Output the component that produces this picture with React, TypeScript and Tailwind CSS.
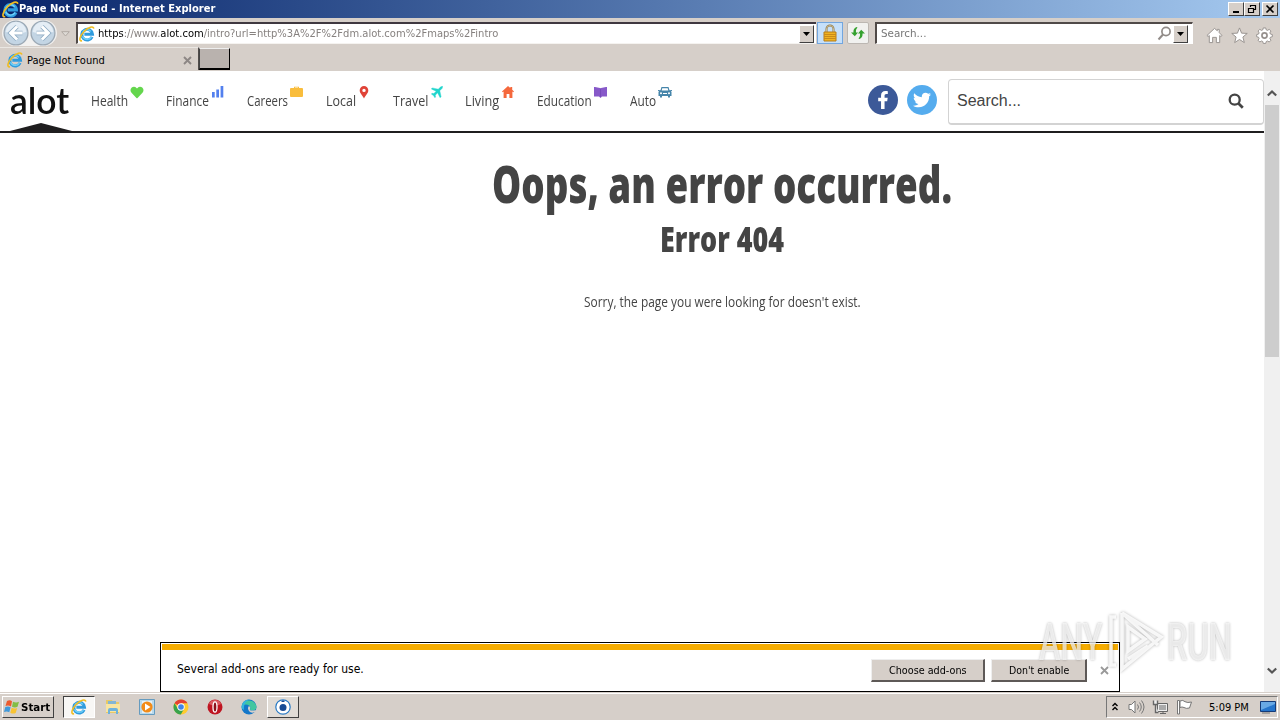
import { useLayoutEffect, useRef, useState } from "react";
import type { ReactNode } from "react";
import { FaFacebookF, FaHeart, FaTwitter } from "react-icons/fa";

const tahoma = "font-['DejaVu_Sans_Condensed','DejaVu_Sans',sans-serif]";
const narrow = "font-['Open_Sans',sans-serif]";

// Squeezes a line of text to a fixed width, for condensed lettering
function Fit({
  width,
  className = "",
  children,
}: {
  width: number;
  className?: string;
  children: ReactNode;
}) {
  const ref = useRef<HTMLSpanElement>(null);
  const [scale, setScale] = useState(1);

  useLayoutEffect(() => {
    if (ref.current) setScale(width / ref.current.offsetWidth);
  }, [width]);

  return (
    <span className={`block shrink-0 ${className}`} style={{ width }}>
      <span
        ref={ref}
        className="inline-block origin-left whitespace-pre"
        style={{ transform: `scaleX(${scale})` }}
      >
        {children}
      </span>
    </span>
  );
}

function IeIcon({ className = "size-4" }: { className?: string }) {
  return (
    <svg viewBox="0 0 18 18" className={`shrink-0 ${className}`} fill="none">
      <path
        d="M14.7 12.2A6 6 0 1 1 15.2 9.4H6"
        stroke="#2f9bdd"
        strokeWidth="3.4"
      />
      <path
        d="M14 12.4A5.7 5.7 0 0 1 4 11.5M4 7.5A5.6 5.6 0 0 1 13.4 6"
        stroke="#6fd0f8"
        strokeWidth="1.5"
      />
      <path
        d="M3.4 16.6C-.7 17.5.8 11.2 5.7 6.2 10.4 1.4 16.4-.6 16.6 3"
        stroke="#f1bd22"
        strokeWidth="1.8"
      />
    </svg>
  );
}

const navItems = [
  {
    label: "Health",
    width: 37,
    box: "w-[75px]",
    icon: <FaHeart className="ml-[2px] h-[13px] w-[14px]" color="#64d64d" />,
  },
  {
    label: "Finance",
    width: 43,
    box: "w-[81px]",
    icon: (
      <svg viewBox="0 0 12 12" className="ml-[3px] size-3" fill="#5380ee">
        <path d="M0 6h2.700v5.500H0zM4.300 3.500H7v8H4.300zM8.600 0h2.700v11.500H8.600z" />
      </svg>
    ),
  },
  {
    label: "Careers",
    width: 41,
    box: "w-[79px]",
    icon: (
      <svg viewBox="0 0 13 12" className="ml-[2px] h-3 w-[13px]" fill="#f9bd3c">
        <path
          fillRule="evenodd"
          d="M4 2V.700h5V2h3a1 1 0 0 1 1 1v7a1 1 0 0 1-1 1H1a1 1 0 0 1-1-1V3a1 1 0 0 1 1-1zM5 1.500h3V2H5z"
        />
      </svg>
    ),
  },
  {
    label: "Local",
    width: 30,
    box: "w-[67px]",
    icon: (
      <svg viewBox="0 0 10 13" className="ml-[3px] h-[13px] w-[10px]" fill="#e04338">
        <path
          fillRule="evenodd"
          d="M5 0a4.300 4.300 0 0 0-4.300 4.300C.7 7.500 3.400 9 5 12.500c1.600-3.500 4.300-5 4.300-8.200A4.300 4.300 0 0 0 5 0m0 2.700a1.700 1.700 0 1 1 0 3.400 1.700 1.700 0 0 1 0-3.400"
        />
      </svg>
    ),
  },
  {
    label: "Travel",
    width: 35,
    box: "w-[72px]",
    icon: (
      <svg viewBox="0 0 12 12" className="ml-[3px] size-3" fill="#20d5cc" stroke="#20d5cc" strokeWidth=".4">
        <path d="m11.700.3-.5 2-2.400 2.400 1.300 6-1 1-2.500-4.900-2.300 2.400.3 1.700-.7.800-1.400-2.200L.3 8.100l.8-.8 1.700.3L5.200 5.300.3 2.900l1-1 6 1.300L9.700.8z" />
      </svg>
    ),
  },
  {
    label: "Living",
    width: 34,
    box: "w-[72px]",
    icon: (
      <svg viewBox="0 0 12 12" className="ml-[3px] size-3" fill="#f5683c">
        <path d="M6 0 0 5.500l.7.800L1.600 5.500V12h3V8h2.800v4h3V5.500l.9.800.7-.8-1.800-1.700V1H8.300v1.100z" />
      </svg>
    ),
  },
  {
    label: "Education",
    width: 55,
    box: "w-[93px]",
    icon: (
      <svg viewBox="0 0 13 12" className="ml-[2px] h-3 w-[13px]" fill="#8759c9">
        <path d="M0 1h1l5 1 .5.500L7 2l5-1h1v9.500H8L6.500 12 5 10.500H0z" />
        <path d="M6.500 2.500v8.500" stroke="#6f43b1" strokeWidth=".7" />
      </svg>
    ),
  },
  {
    label: "Auto",
    width: 26,
    box: "w-[60px]",
    icon: (
      <svg viewBox="0 0 14 12" className="ml-[2px] h-3 w-[14px]" fill="#4685aa">
        <path
          fillRule="evenodd"
          d="M3.500 1h7l1 3.300L14 4v1h-1l.5 1v4H12v1.500h-2V10H4v1.500H2V10H.5V6L1 5H0V4l2.500.3zm.8 1.200-.6 2.300h6.600l-.6-2.300zM3 6.200a1 1 0 1 0 0 2 1 1 0 0 0 0-2m8 0a1 1 0 1 0 0 2 1 1 0 0 0 0-2M5 7v1h4V7z"
        />
      </svg>
    ),
  },
];

function TitleBar() {
  return (
    <div className="flex h-[18px] items-center bg-linear-to-r from-[#0a246a] to-[#a6caf0] pl-[2px] pr-[2px]">
      <IeIcon className="size-[17px]" />
      <Fit width={196} className={`text-[11px] font-bold leading-[18px] text-white ${tahoma}`}>
        Page Not Found - Internet Explorer
      </Fit>
      <div className="ml-auto flex">
        {["min", "max", "close"].map((kind) => (
          <div
            key={kind}
            className="flex h-[14px] w-4 items-center justify-center border border-b-[#404040] border-l-white border-r-[#404040] border-t-white bg-[#d6cfc9] last:ml-[2px]"
          >
            <svg viewBox="0 0 12 10" className="h-[10px] w-3" fill="none" stroke="#000">
              {kind === "min" && <path d="M3 8h6" strokeWidth="2" />}
              {kind === "max" && (
                <path d="M4.500 3V1.500h5v4H8M4 1.500h6M2.500 4.500h5v4h-5zM2 4.500h6" strokeWidth="1.200" />
              )}
              {kind === "close" && <path d="m2.500 1.500 7 7m0-7-7 7" strokeWidth="1.700" />}
            </svg>
          </div>
        ))}
      </div>
    </div>
  );
}

function DropButton() {
  return (
    <div className="flex h-[18px] w-[15px] items-center justify-center border border-b-[#404040] border-l-white border-r-[#404040] border-t-white bg-[#d6cfc9]">
      <svg viewBox="0 0 7 4" className="h-1 w-[7px]">
        <path d="M0 0h7L3.500 4z" />
      </svg>
    </div>
  );
}

function Toolbar() {
  return (
    <div className="flex h-[29px] items-start bg-[#d6cfc9] pt-1">
      <div className="-mt-[2px] ml-[2px] flex h-[26px] w-[55px] items-center justify-between rounded-full bg-[#f2f1f0] px-px">
        {["M13 6 7 12l6 6M7 12h11", "m11 6 6 6-6 6m6-6H6"].map((d) => (
          <svg key={d} viewBox="0 0 24 24" className="size-[26px]" fill="none">
            <circle cx="12" cy="12" r="11" fill="#c3d5e4" stroke="#9ca9b5" strokeWidth="1.200" />
            <path d="M2.500 11a9.500 9.500 0 0 1 19 0q-9.500 3-19 0" fill="#e4edf5" />
            <path d={d} stroke="#8eabc3" strokeWidth="4.200" />
            <path d={d} stroke="#fff" strokeWidth="2.700" />
          </svg>
        ))}
      </div>
      <svg viewBox="0 0 9 6" className="ml-1 mt-[9px] h-[6px] w-[9px]" fill="#dedad5" stroke="#b0a9a3">
        <path d="M.7.700h7.600L4.500 5z" />
      </svg>
      <div className="ml-[6px] flex h-[22px] w-[740px] items-center border-b border-l-2 border-t-2 border-b-[#f5f3f0] border-l-[#504a48] border-t-[#3f3840] bg-white pl-px">
        <IeIcon className="size-4" />
        <Fit width={400} className={`ml-[3px] text-[11px] leading-4 text-[#86817f] ${tahoma}`}>
          <span className="text-black">https</span>://www.<span className="text-black">alot.com</span>
          /intro?url=http%3A%2F%2Fdm.alot.com%2Fmaps%2Fintro
        </Fit>
        <div className="ml-auto mr-[2px]">
          <DropButton />
        </div>
      </div>
      <div className="ml-px flex h-[22px] w-[26px] items-center justify-center border border-[#72a6df] bg-[#c6e0fa]">
        <svg viewBox="0 0 16 18" className="h-[18px] w-4" fill="none">
          <path d="M4.500 8V5a3.500 3.500 0 0 1 7 0v3" stroke="#8f7847" strokeWidth="2" />
          <path d="M4.500 8V5a3.500 3.500 0 0 1 7 0v3" stroke="#e2d5b2" strokeWidth=".7" />
          <path d="M2 8h12v9H2z" fill="#f0b321" stroke="#b77c16" />
          <path d="M2 10.500h12M2 12.500h12M2 14.500h12" stroke="#c98a19" />
        </svg>
      </div>
      <div className="ml-1 flex h-[22px] w-[22px] items-center justify-center rounded-[2px] border border-[#bcb7b2] bg-[#f1f1ef]">
        <svg viewBox="0 0 16 16" className="size-4" fill="#35a12f">
          <path d="M6.500 2C4 3 3.200 5 3.500 7.500H1l3.800 3.700L8 7.500H6C5.800 5.500 6 4 7.500 2.500zM9.500 14c2.500-1 3.300-3 3-5.500H15l-3.800-3.700L8 8.500h2c.2 2 0 3.500-1.500 5z" />
        </svg>
      </div>
      <div className="ml-[6px] flex h-[22px] w-[318px] items-center border-b border-l-2 border-r border-t-2 border-b-white border-l-[#504a48] border-r-white border-t-[#504a48] bg-white pl-1">
        <Fit width={45} className={`text-[11px] leading-4 text-[#777] ${tahoma}`}>
          Search...
        </Fit>
        <svg viewBox="0 0 15 15" className="ml-auto size-[15px]" fill="none" stroke="#918b88">
          <circle cx="9" cy="5.500" r="4.100" strokeWidth="1.700" />
          <path d="m6 8.500-4.500 5" strokeWidth="2" />
        </svg>
        <div className="ml-px mr-1">
          <DropButton />
        </div>
      </div>
      <div className="ml-[13px] mt-[5px] flex items-center gap-2">
        <svg viewBox="0 0 18 18" className="size-[17px]" fill="#fff" stroke="#96908d">
          <path d="M9 1.500 1 9l1.300 1L3.500 9v7.500H7V11h4v5.500h3.500V9l1.200 1L17 9l-3-3V2.500h-2V4z" />
        </svg>
        <svg viewBox="0 0 18 18" className="size-[17px]" fill="#fff" stroke="#96908d">
          <path d="m9 1 2.200 5.500 6 .3-4.600 3.800 1.500 5.900L9 13.200l-5.100 3.300 1.500-5.900L.8 6.800l6-.3z" />
        </svg>
        <svg viewBox="0 0 18 18" className="size-[17px]" fill="#fff" stroke="#96908d">
          <path d="M7.700 1h2.600l.5 2 1.300.6 1.900-1.100 1.800 1.800-1.100 1.900.6 1.300 2 .5v2.300l-2 .5-.6 1.400 1.100 1.800-1.800 1.900-1.900-1.100-1.300.6-.5 2H7.700l-.5-2-1.300-.6L4 15.900 2.200 14l1.100-1.800-.6-1.400-2-.5V8l2-.5.6-1.300-1.100-1.900L4 2.500l1.900 1.100L7.200 3z" />
          <circle cx="9" cy="9" r="2.700" strokeWidth="1.800" />
        </svg>
      </div>
    </div>
  );
}

function TabRow() {
  return (
    <div className="flex h-6 items-start bg-[#d6cfc9]">
      <div className="flex h-[23px] w-[199px] items-center border-r border-t border-r-[#514d4b] border-t-[#eae7e3] pl-[7px] pr-[6px] pt-[2px]">
        <IeIcon className="size-4" />
        <Fit width={78} className={`ml-1 mt-px text-[11px] leading-4 text-black ${tahoma}`}>
          Page Not Found
        </Fit>
        <svg viewBox="0 0 9 9" className="ml-auto size-[9px]" stroke="#8d8785" strokeWidth="1.900">
          <path d="m1 1 7 7m0-7L1 8" />
        </svg>
      </div>
      <div className="mt-px h-[22px] w-[31px] border-b-2 border-l border-r border-t border-b-black border-l-[#444] border-r-black border-t-[#eee] bg-[#b9b2ae]" />
    </div>
  );
}

function SiteHeader() {
  return (
    <header className="flex h-[62px] items-start border-b-2 border-[#1f1e1f] bg-white">
      <div className="flex h-[60px] w-[91px] shrink-0 flex-col pl-[10px]">
        <Fit width={59} className="mt-[7px] h-[45px] font-['Lato',sans-serif] text-[36px] font-semibold leading-[44px] text-[#111]">
          alot
        </Fit>
        <svg viewBox="0 0 62 8" className="h-2 w-[62px]" fill="#1f1e1f">
          <path d="m0 8 31-8 31 8z" />
        </svg>
      </div>
      <nav className="flex pt-[15px]">
        {navItems.map((item) => (
          <div key={item.label} className={`flex h-7 shrink-0 ${item.box}`}>
            <Fit width={item.width} className={`text-[15px] font-medium leading-7 text-[#444] ${narrow}`}>
              {item.label}
            </Fit>
            {item.icon}
          </div>
        ))}
      </nav>
      <div className="ml-auto flex items-start pt-2">
        <div className="mt-[6px] flex size-[30px] items-center justify-center rounded-full bg-[#3c5998] text-white">
          <FaFacebookF size={18} />
        </div>
        <div className="ml-[9px] mt-[6px] flex size-[30px] items-center justify-center rounded-full bg-[#55acee] text-white">
          <FaTwitter size={18} />
        </div>
        <div className="ml-[11px] flex h-[46px] w-[316px] items-center rounded-[4px] border border-b-2 border-[#d3d3d3] bg-white pb-px pl-2 pr-[19px] font-['Liberation_Sans',Arial,sans-serif] text-[16px] text-[#444]">
          Search...
          <svg viewBox="0 0 16 16" className="ml-auto size-4" fill="none" stroke="#444">
            <circle cx="6.700" cy="6.700" r="5" strokeWidth="2.300" />
            <path d="m10.300 10.300 4.500 4.500" strokeWidth="2.700" />
          </svg>
        </div>
      </div>
    </header>
  );
}

function Scrollbar() {
  return (
    <div className="flex w-4 shrink-0 flex-col items-center bg-[#f0f0f0] pt-[18px] pb-[17px]">
      <svg viewBox="0 0 10 8" className="h-2 w-[10px]" fill="none" stroke="#555" strokeWidth="2.200">
        <path d="m.8 6.500 4.200-4 4.200 4" />
      </svg>
      <div className="mt-2 h-[252px] w-[14px] bg-[#cdcdcd]" />
      <svg viewBox="0 0 10 8" className="mt-auto h-2 w-[10px]" fill="none" stroke="#555" strokeWidth="2.200">
        <path d="m.8 1.500 4.200 4 4.200-4" />
      </svg>
    </div>
  );
}

function ClassicButton({ box, width, label }: { box: string; width: number; label: string }) {
  return (
    <div
      className={`flex h-[23px] items-center justify-center border-b-2 border-l border-r-2 border-t border-b-[#5e5957] border-l-[#eee] border-r-[#5e5957] border-t-[#eee] bg-[#d6cfc9] pt-[2px] ${box}`}
    >
      <Fit width={width} className="text-[11px] leading-4">
        {label}
      </Fit>
    </div>
  );
}

function AddonBar() {
  return (
    <div className={`absolute bottom-0 left-[160px] h-[50px] w-[960px] border border-black bg-white p-px text-black ${tahoma}`}>
      <div className="h-[6px] bg-[#f5ac00]" />
      <div className="flex items-center pl-[15px] pr-[9px] pt-[9px]">
        <Fit width={187} className="-mt-[3px] text-[12px] leading-4">
          Several add-ons are ready for use.
        </Fit>
        <div className="ml-auto flex items-center">
          <ClassicButton box="w-[114px]" width={78} label="Choose add-ons" />
          <div className="w-[6px]" />
          <ClassicButton box="w-[96px]" width={60} label="Don't enable" />
          <svg viewBox="0 0 9 9" className="ml-[13px] size-[9px]" stroke="#999" strokeWidth="1.800">
            <path d="m1 1 7 7m0-7L1 8" />
          </svg>
        </div>
      </div>
    </div>
  );
}

function Watermark() {
  return (
    <div className="absolute left-[1039px] top-[609px] flex h-[64px] items-center font-['Roboto',sans-serif] text-[51px] font-medium leading-[64px] text-white/70 [text-shadow:0_0_3px_rgba(0,0,0,0.3)]">
      <Fit width={63} className="mt-1">ANY</Fit>
      <svg
        viewBox="0 0 58 64"
        className="ml-[6px] h-[64px] w-[58px] drop-shadow-[0_0_1.500px_rgba(0,0,0,0.35)]"
        fill="none"
        stroke="#fff"
        strokeOpacity=".85"
        strokeWidth="3.500"
      >
        <path d="M8 8H3v48h5M14 4l39 24-39 32V4M14 4l36 32M20 18v24l17-12zM20 50l20-13" />
      </svg>
      <Fit width={65} className="ml-px mt-1">RUN</Fit>
    </div>
  );
}

function Taskbar() {
  return (
    <div className="flex h-7 items-start border-t border-[#d6cfc9] bg-[#d6cfc9] shadow-[inset_0_1px_0_#fff]">
      <div className="ml-[2px] mt-[3px] flex h-[22px] w-[52px] items-center border border-b-[#404040] border-l-white border-r-[#404040] border-t-white pl-px">
        <svg viewBox="0 0 16 16" className="size-4">
          <path d="M3 2q3-1.500 5 .3L7 7.500Q4.500 6 1.500 7z" fill="#ec5a2d" />
          <path d="M9 2.700q3 1.300 6 .1l-1.500 5Q11 9 8 7.800z" fill="#83bd45" />
          <path d="M1.300 8q3-1.200 5.300.3l-1.300 5Q3 12 0 13z" fill="#4199da" />
          <path d="M7.700 8.700q2.500 1.500 5.500.2l-1.500 5Q9 15.300 6.300 13.700z" fill="#f8c332" />
        </svg>
        <Fit width={29} className={`ml-px mt-px text-[11px] font-bold leading-4 text-black ${tahoma}`}>
          Start
        </Fit>
      </div>
      <div className="ml-[9px] mt-[3px] flex h-[22px] w-8 items-center justify-center border border-b-white border-l-[#404040] border-r-white border-t-[#404040] bg-[#f8f7f5]">
        <IeIcon className="size-4" />
      </div>
      <div className="ml-[10px] mt-[6px] flex gap-[18px]">
        <svg viewBox="0 0 16 16" className="size-4">
          <path d="M1 1h6l1 2h6v11H1z" fill="#e7c967" />
          <path d="M3 2h8v3H3z" fill="#83b6d3" />
          <path d="M1 5h14v8H1z" fill="#f8e5a1" />
          <path d="M3 15v-4q0-2 2-2h6q2 0 2 2v4h-2v-3H5v3z" fill="#6eb2db" />
        </svg>
        <svg viewBox="0 0 16 16" className="size-4">
          <path d="M.5.500h15v15H.5z" fill="#b8d9ec" stroke="#659bbf" />
          <path d="M3 2h10v12H3z" fill="#e6f1f7" />
          <circle cx="8" cy="8" r="5.600" fill="#f28b18" />
          <path d="M6 4.500v7L11.500 8z" fill="#fff" />
        </svg>
        <svg viewBox="0 0 16 16" className="size-4">
          <circle cx="8" cy="8" r="7.500" fill="#ffcb2e" />
          <path d="M8 8 1.500 4.200A7.500 7.500 0 0 1 14.500 4.200H8z" fill="#e34133" />
          <path d="M1.500 4.200A7.500 7.500 0 0 0 7.800 15.500L11 10 5 10z" fill="#38a34c" />
          <circle cx="8" cy="8" r="3.700" fill="#fff" />
          <circle cx="8" cy="8" r="2.800" fill="#4285e8" />
        </svg>
        <svg viewBox="0 0 16 16" className="size-4">
          <circle cx="8" cy="8" r="7.500" fill="#bf1521" />
          <path d="M2 5a6.500 6.500 0 0 1 12 0Q8 8 2 5" fill="#da5960" />
          <ellipse cx="8" cy="8" rx="2" ry="5.200" fill="#8b111b" stroke="#fff" strokeWidth="1.300" />
        </svg>
        <svg viewBox="0 0 16 16" className="size-4">
          <circle cx="8" cy="8" r="7.500" fill="#1477c9" />
          <path d="M.8 7A7.500 7.500 0 0 1 15.500 8q0 3.500-4 3.500-3 0-2.500-1.500 1-2-1-3.500Q5 4.500.8 7" fill="#43c6a0" />
          <path d="M.7 7A7.500 7.500 0 0 1 9 .6Q2 3 3 11 0 10 .7 7" fill="#35b6dc" />
          <path d="M8 7q2 1 1 3t4 1.500l2-.5-1 2q-4 2-6-1T8 7" fill="#d6cfc9" />
        </svg>
      </div>
      <div className="ml-[10px] mt-[3px] flex h-[22px] w-8 items-center justify-center border border-b-[#404040] border-l-white border-r-[#404040] border-t-white bg-[#e1dcd6]">
        <svg viewBox="0 0 16 16" className="size-4" fill="none">
          <circle cx="8" cy="8" r="7.200" fill="#fff" stroke="#2679c5" strokeWidth="1.200" />
          <circle cx="8" cy="8.500" r="3.500" fill="#164b95" />
          <path d="m6 3 2-2 2 2" fill="#164b95" />
        </svg>
      </div>
      <div className="ml-auto mr-[2px] mt-[3px] flex h-[22px] w-[172px] items-center border border-b-white border-l-[#777] border-r-white border-t-[#777] pl-[5px]">
        <svg viewBox="0 0 6 9" className="h-[9px] w-[6px] -mt-[2px]" fill="none" stroke="#000" strokeWidth="1.400">
          <path d="m.5 4 2.500-2.500L5.500 4m-5 4L3 5.500 5.500 8" />
        </svg>
        <svg viewBox="0 0 17 16" className="ml-[10px] h-4 w-[17px]" fill="#fff" stroke="#777">
          <path d="M1 5.500h2.500L7 2v12l-3.500-3.500H1z" />
          <path d="M9.500 5.500q2 2.500 0 5m2-7q3.500 4.500 0 9m2-11q5 6.500 0 13" fill="none" />
        </svg>
        <svg viewBox="0 0 17 16" className="ml-[7px] h-4 w-[17px]" fill="#eee" stroke="#666">
          <path d="M5.500 4.500h10v8h-10zM8 14.500h6m-3-2v2" />
          <path d="M7 6h7v5H7z" fill="#aaa" stroke="none" />
          <path d="M1.500 1.500v4h4v-4M3.500 5.500v8h3" strokeWidth="1.400" />
        </svg>
        <svg viewBox="0 0 17 16" className="ml-[7px] h-4 w-[17px]" fill="#fff" stroke="#777">
          <path d="M1.500 1.500h2V15h-2zM4 2q3-1.500 5 .7 2.500 1.500 6.500.3l-2 6Q10 10 8 8.500 6 7.500 4 8.500z" />
        </svg>
        <Fit width={40} className={`ml-4 mt-px text-[11px] leading-4 text-black ${tahoma}`}>
          5:09 PM
        </Fit>
        <svg viewBox="0 0 16 14" className="ml-[11px] h-[14px] w-4">
          <path d="M.5 1.500h15v10H.5z" fill="#2675cb" stroke="#153b78" />
          <path d="M1 2h14v2L1 10z" fill="#69a9e4" />
          <path d="M2 13h8" stroke="#777" />
        </svg>
      </div>
    </div>
  );
}

export default function App() {
  return (
    <div className="relative flex h-[720px] w-[1280px] flex-col overflow-hidden bg-white">
      <TitleBar />
      <Toolbar />
      <TabRow />
      <div className="relative flex min-h-0 flex-1">
        <div className="min-w-0 flex-1">
          <SiteHeader />
          <main className={`flex flex-col items-center pl-[180px] pt-5 text-[#444] ${narrow}`}>
            <h1>
              <Fit width={460} className="text-[51px] font-extrabold leading-[60px]">
                Oops, an error occurred.
              </Fit>
            </h1>
            <h2>
              <Fit width={124} className="mt-[6px] text-[36px] font-extrabold leading-10">
                Error 404
              </Fit>
            </h2>
            <p>
              <Fit width={277} className="mt-[30px] text-[15px] font-medium leading-6">
                Sorry, the page you were looking for doesn't exist.
              </Fit>
            </p>
          </main>
        </div>
        <Scrollbar />
        <AddonBar />
      </div>
      <Taskbar />
      <Watermark />
    </div>
  );
}
